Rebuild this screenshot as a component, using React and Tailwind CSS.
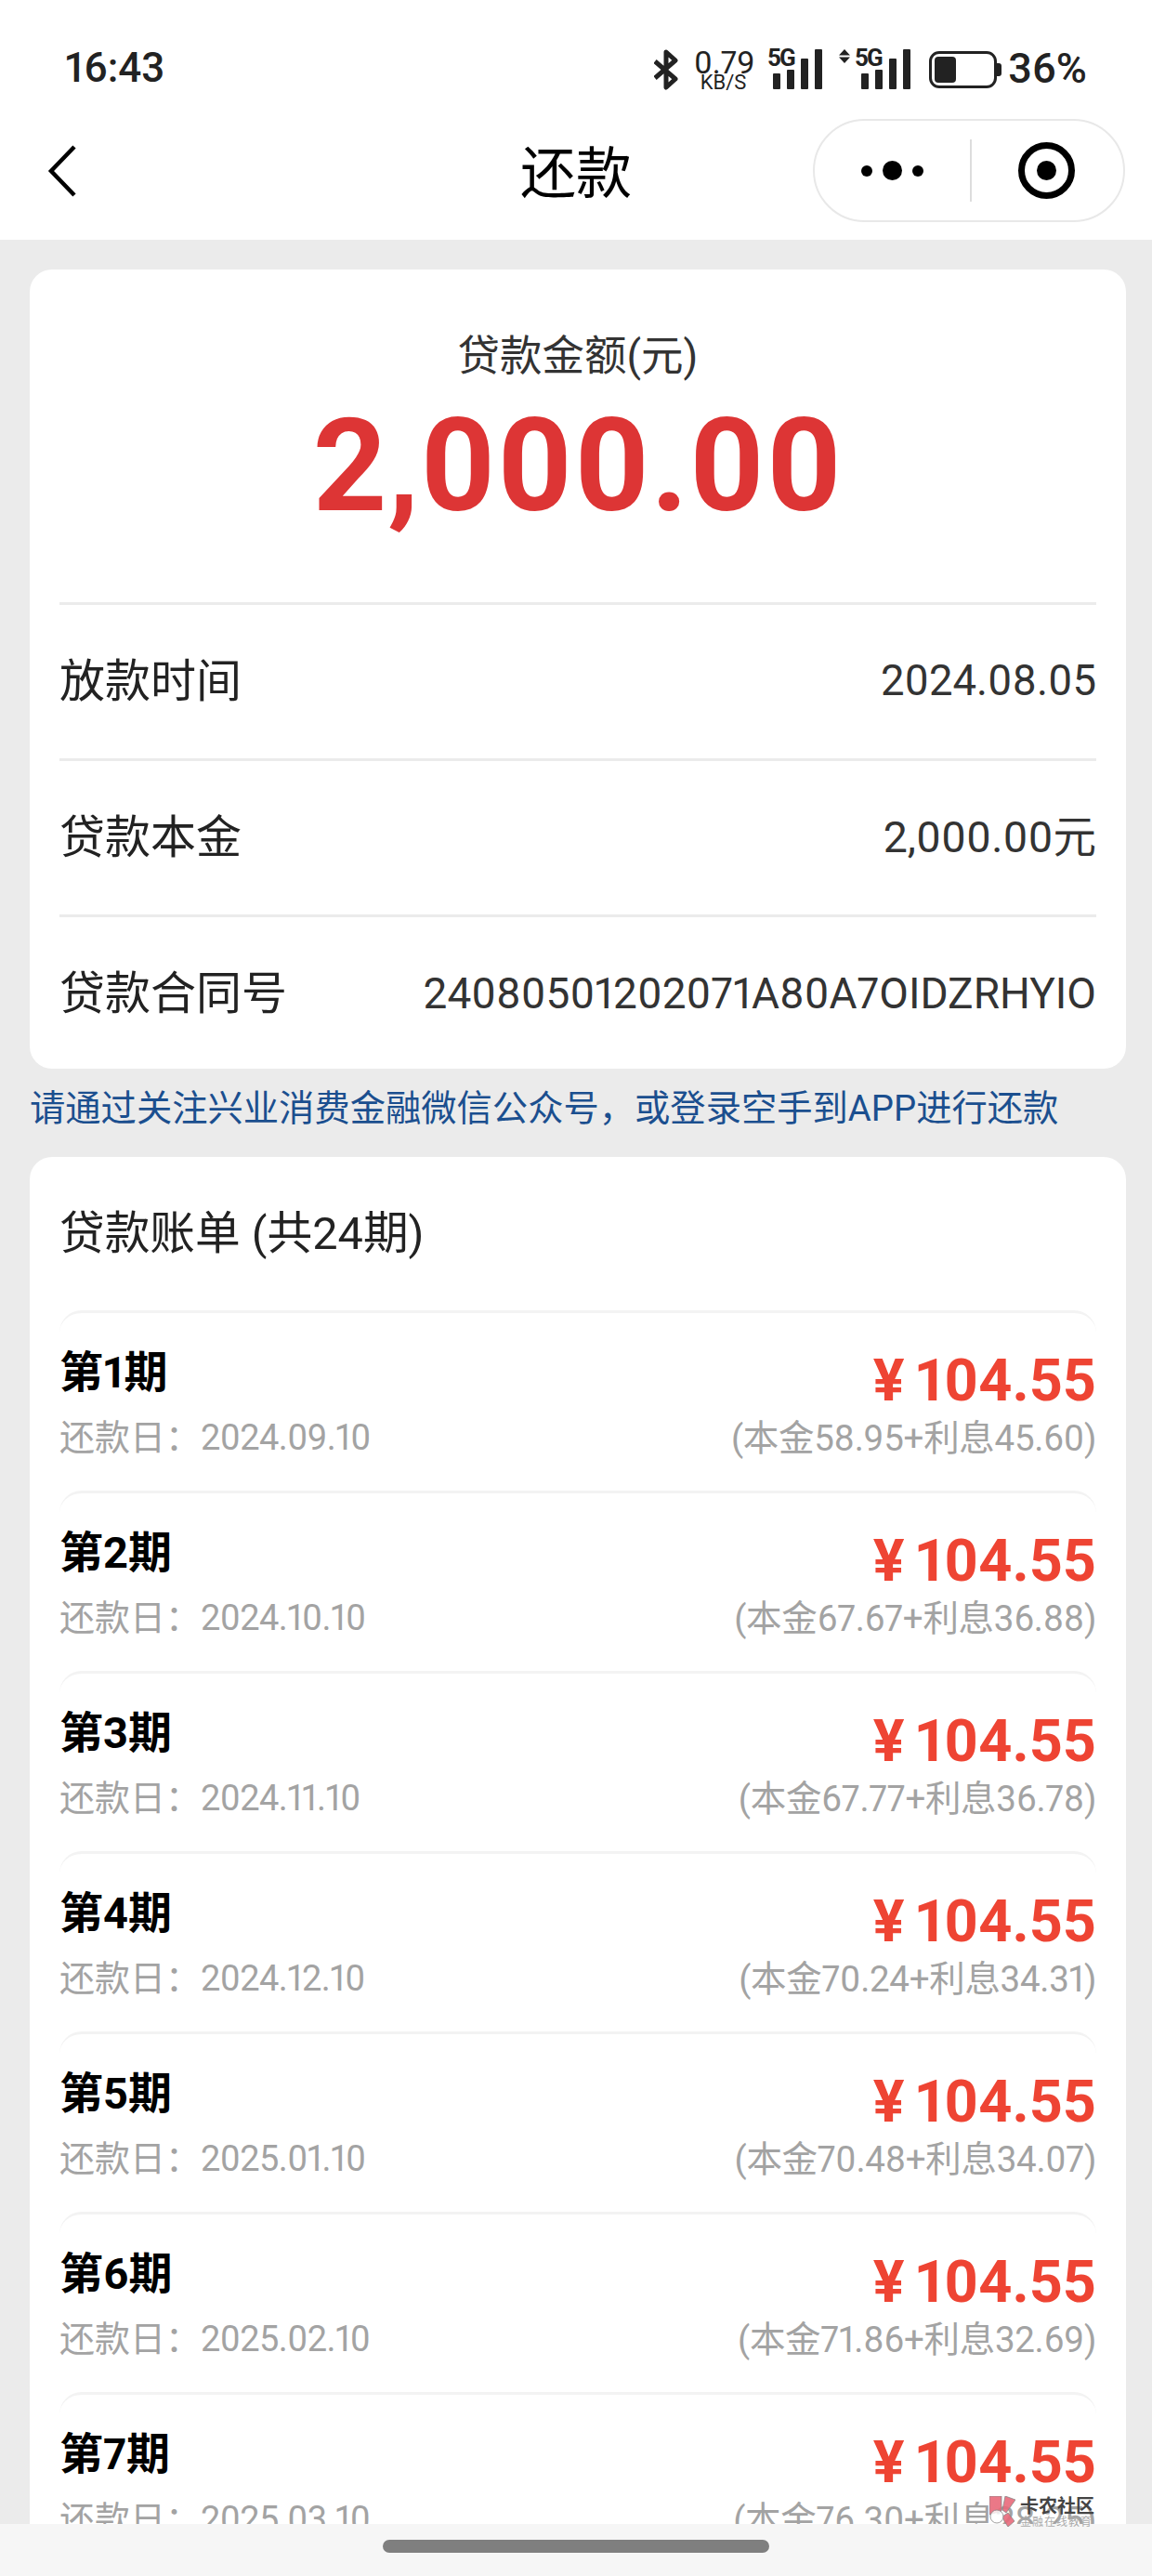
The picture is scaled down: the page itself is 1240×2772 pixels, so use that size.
import React from 'react';

const bills = [
  ['第1期', '2024.09.10', '58.95', '45.60'],
  ['第2期', '2024.10.10', '67.67', '36.88'],
  ['第3期', '2024.11.10', '67.77', '36.78'],
  ['第4期', '2024.12.10', '70.24', '34.31'],
  ['第5期', '2025.01.10', '70.48', '34.07'],
  ['第6期', '2025.02.10', '71.86', '32.69'],
  ['第7期', '2025.03.10', '76.30', '28.25'],
];

function Signal({ arrows }) {
  return (
    <svg width={arrows ? 78 : 60} height="44" viewBox={arrows ? '0 0 78 44' : '0 0 60 44'} fill="#222">
      {arrows && <path d="M6 0l6 6.5H0zM6 15l6-6.5H0z" />}
      <g transform={arrows ? 'translate(18 0)' : 'translate(0 0)'}>
        <rect x="6" y="26" width="8" height="17" rx="1" />
        <rect x="21" y="22" width="8" height="21" rx="1" />
        <rect x="36" y="10" width="8" height="33" rx="1" />
        <rect x="51" y="0" width="8" height="43" rx="1" />
      </g>
    </svg>
  );
}

function StatusBar() {
  return (
    <div className="h-[128px] flex items-start justify-between pt-[50px] pl-[70px] pr-[70px]">
      <div className="text-[44px] leading-[46px] font-medium text-[#222]">16:43</div>
      <div className="flex items-start">
        <svg className="mt-[3px]" width="26" height="44" viewBox="0 0 26 44" fill="none" stroke="#222" strokeWidth="5">
          <path d="M1 13l22 19-10 9V3l10 9L1 31" strokeLinejoin="round" />
        </svg>
        <div className="relative w-[63px] h-[46px] ml-[17px] text-[#222]">
          <div className="text-center text-[34px] leading-[34px]">0.79</div>
          <div className="absolute left-0 right-0 top-[28px] text-center text-[22px] leading-[22px]">KB/S</div>
        </div>
        <div className="relative ml-[16px] mt-[3px]">
          <span className="absolute left-[0px] top-[-4px] text-[26px] leading-[26px] font-bold text-[#222] tracking-[-2px]">5G</span>
          <Signal />
        </div>
        <div className="relative ml-[17px] mt-[3px]">
          <span className="absolute left-[17px] top-[-4px] text-[26px] leading-[26px] font-bold text-[#222] tracking-[-2px]">5G</span>
          <Signal arrows />
        </div>
        <div className="flex items-center ml-[19px] mt-[5px]">
          <div className="w-[73px] h-[40px] border-[3px] border-[#222] rounded-[11px] p-[3px] flex">
            <div className="w-[23px] bg-[#222] rounded-[4px]" />
          </div>
          <div className="w-[5px] h-[14px] bg-[#222] rounded-r-[3px]" />
        </div>
        <div className="w-[86px] ml-[6px] mt-[1px] text-[45px] leading-[46px] font-medium text-[#222] text-right">36%</div>
      </div>
    </div>
  );
}

function NavBar() {
  return (
    <div className="h-[130px] relative flex items-start justify-center">
      <svg className="absolute left-[50px] top-[28px]" width="34" height="56" viewBox="0 0 34 56" fill="none" stroke="#000" strokeWidth="4.5">
        <path d="M30 2L5 28l25 26" />
      </svg>
      <div className="text-[60px] leading-[70px] mt-[25px] text-black">还款</div>
      <div className="absolute left-[875px] top-0 w-[336px] h-[111px] rounded-full border-2 border-[#e8e8e8] flex items-center">
        <div className="w-[167px] flex items-center justify-center gap-[11px]">
          <span className="w-[12px] h-[12px] rounded-full bg-black" />
          <span className="w-[21px] h-[21px] rounded-full bg-black" />
          <span className="w-[12px] h-[12px] rounded-full bg-black" />
        </div>
        <div className="w-[2px] h-[67px] bg-[#dddddd]" />
        <div className="flex-1 flex items-center justify-center pr-[2px]">
          <div className="w-[61px] h-[61px] rounded-full border-[7px] border-black flex items-center justify-center">
            <div className="w-[21px] h-[21px] rounded-full bg-black" />
          </div>
        </div>
      </div>
    </div>
  );
}

function InfoRow({ label, value, cls }) {
  return (
    <div className="h-[168px] border-t-[3px] border-[#ebebeb] flex items-center justify-between">
      <span className="text-[49px] text-[#222]">{label}</span>
      <span className={cls}>{value}</span>
    </div>
  );
}

function BillRow({ name, date, principal, interest }) {
  return (
    <div className="h-[194px] border-t-[3px] border-[#f3f3f3] rounded-t-[24px] flex justify-between">
      <div className="pt-[37px]">
        <div className="text-[47px] leading-[54px] font-bold text-black">{name}</div>
        <div className="mt-[20px] text-[38px] leading-[46px] text-[#a3a3a3]">
          还款日：<span className="tracking-[-0.6px]">{date}</span>
        </div>
      </div>
      <div className="pt-[42px] text-right">
        <div className="text-[63px] leading-[62px] font-bold text-[#ee4433]">
          <span className="mr-[12px]">¥</span>104.55
        </div>
        <div className="mt-[8px] text-[38.5px] leading-[46px] text-[#a3a3a3] tracking-[-0.3px]">(本金{principal}+利息{interest})</div>
      </div>
    </div>
  );
}

export default function App() {
  return (
    <div className="relative w-[1240px] h-[2772px] flex flex-col overflow-hidden bg-[#ebebeb] proportional-nums font-[Roboto,'Noto_Sans_CJK_SC',sans-serif]">
      <div className="bg-white h-[258px] shrink-0">
        <StatusBar />
        <NavBar />
      </div>

      <div className="flex-1 min-h-0 overflow-hidden pl-[32px] pr-[28px] pt-[32px]">
        <div className="bg-white rounded-[24px] px-[32px] h-[860px]">
          <div className="h-[358px] flex flex-col items-center pt-[66px]">
            <div className="text-[45.5px] leading-[56px] text-[#333]">贷款金额(元)</div>
            <div className="mt-[19px] text-[139px] leading-[142px] font-bold tracking-[0.5px] text-[#dd3535]">2,000.00</div>
          </div>
          <InfoRow label="放款时间" value="2024.08.05" cls="text-[45.5px] text-[#333]" />
          <InfoRow label="贷款本金" value="2,000.00元" cls="text-[46.5px] text-[#333]" />
          <InfoRow label="贷款合同号" value="24080501202071A80A7OIDZRHYIO" cls="text-[46px] text-[#333]" />
        </div>

        <div className="h-[95px] pb-[9px] flex items-center text-[38.3px] text-[#1b4f8f]">
          请通过关注兴业消费金融微信公众号，或登录空手到APP进行还款
        </div>

        <div className="bg-white rounded-[24px] px-[32px]">
          <div className="h-[165px] flex items-center text-[48.7px] text-[#222]">贷款账单 (共24期)</div>
          {bills.map(b => (
            <BillRow key={b[0]} name={b[0]} date={b[1]} principal={b[2]} interest={b[3]} />
          ))}
        </div>
      </div>

      <div className="h-[56px] shrink-0 bg-[#f6f6f6] flex justify-center pt-[17px]">
        <div className="w-[416px] h-[14px] rounded-full bg-[#7f7f7f]" />
      </div>

      {/* forum watermark sits on top of everything */}
      <div className="absolute left-[1065px] top-[2686px] flex">
        <svg width="28" height="33" viewBox="0 0 28 33" fill="#e8697a" fillOpacity="0.9" stroke="#888" strokeWidth="0.8">
          <path d="M0 0h13v16L0 20zM17 0l11 4-10 14-4-3zM14 22l6-4 7 9-7 6-4-6z" />
          <circle cx="8" cy="22" r="7" fill="#fff" fillOpacity="0.8" />
        </svg>
        <div className="ml-[5px] mt-[1px]">
          <div className="text-[20px] leading-[21px] font-bold text-[#444]">卡农社区</div>
          <div className="text-[12px] leading-[12px] text-[#aaa] tracking-[1px]">金融在线教育</div>
        </div>
      </div>
    </div>
  );
}
